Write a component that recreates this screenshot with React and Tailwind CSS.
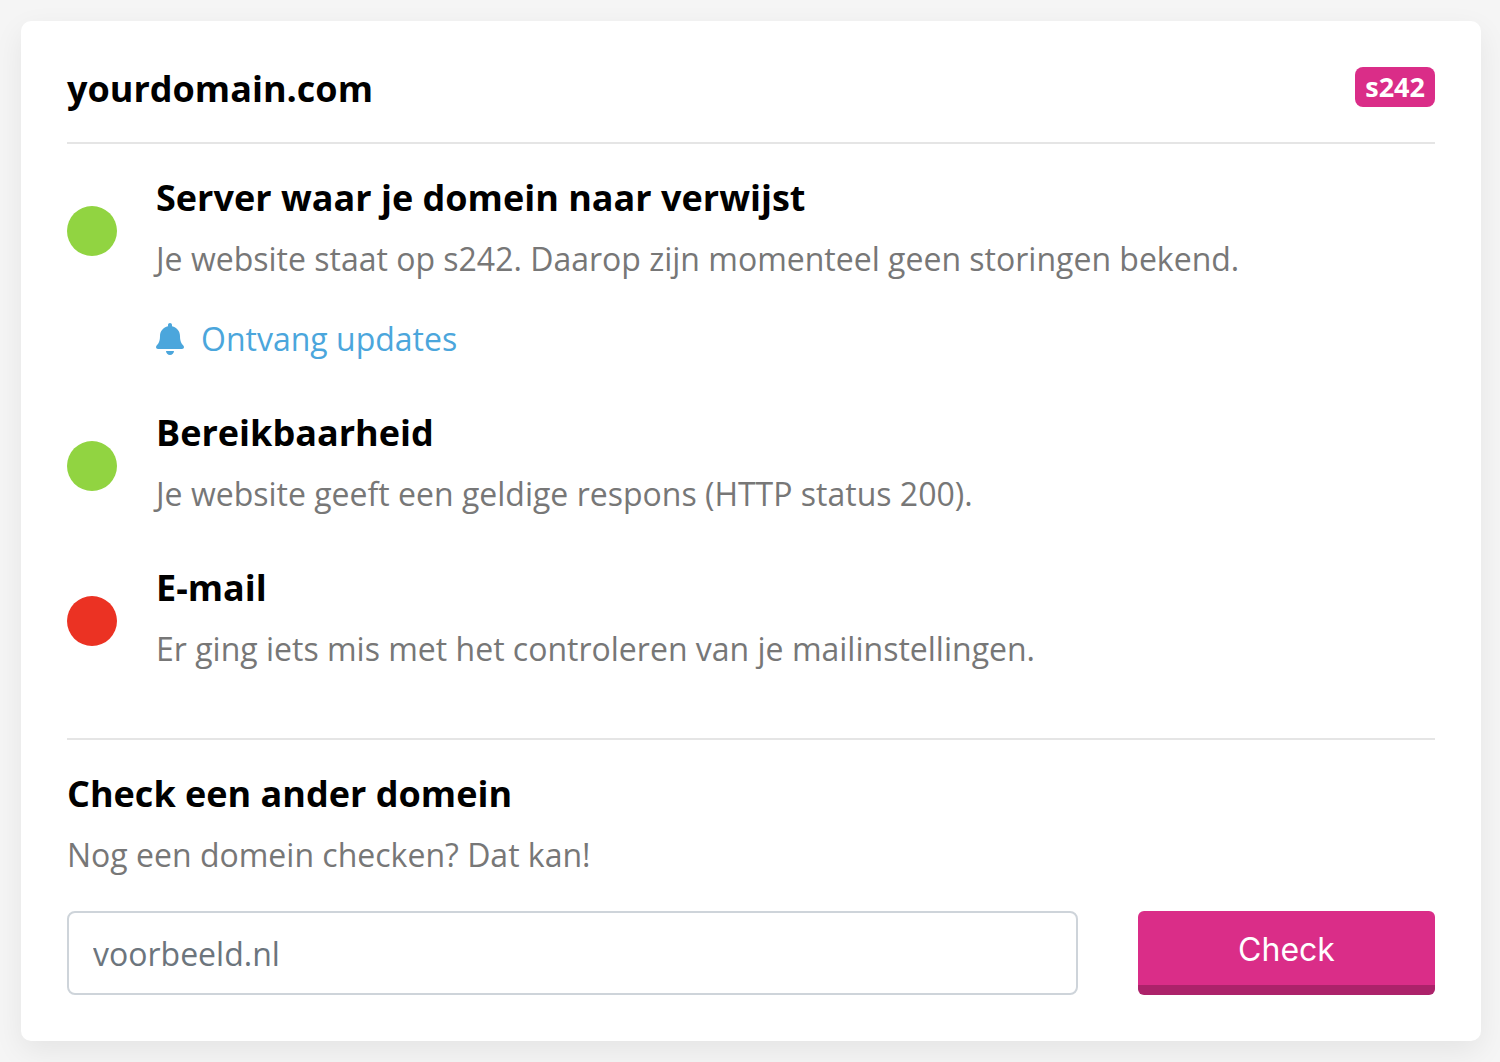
import { useState } from 'react'

const checks = [
  {
    titel: 'Server waar je domein naar verwijst',
    tekst: 'Je website staat op s242. Daarop zijn momenteel geen storingen bekend.',
    ok: true,
    updates: true,
  },
  {
    titel: 'Bereikbaarheid',
    tekst: 'Je website geeft een geldige respons (HTTP status 200).',
    ok: true,
  },
  {
    titel: 'E-mail',
    tekst: 'Er ging iets mis met het controleren van je mailinstellingen.',
    ok: false,
  },
]

function Bell() {
  return (
    <svg className="w-7 h-8" viewBox="0 0 448 512" fill="currentColor" aria-hidden="true">
      <path d="M224 512c35.32 0 63.97-28.65 63.97-64H160.03c0 35.35 28.65 64 63.97 64zm215.39-149.71c-19.32-20.76-55.47-51.99-55.47-154.29 0-77.7-54.48-139.9-127.94-155.16V32c0-17.67-14.32-32-31.98-32s-31.98 14.33-31.98 32v20.84C118.56 68.1 64.08 130.3 64.08 208c0 102.3-36.15 133.53-55.47 154.29-6 6.45-8.66 14.16-8.61 21.71.11 16.4 12.98 32 32.1 32h383.8c19.12 0 32-15.6 32.1-32 .05-7.55-2.61-15.27-8.61-21.71z" />
    </svg>
  )
}

function Check({ titel, tekst, ok, updates }) {
  return (
    <li className="flex items-start gap-[39px]">
      <span className={`mt-[30px] size-[50px] shrink-0 rounded-full ${ok ? 'bg-[#91d441]' : 'bg-[#eb3223]'}`} />
      <div>
        <h2 className="text-[36px] leading-[44px] font-bold text-black">{titel}</h2>
        <p className="mt-[15px] text-[32px] leading-[48px]">{tekst}</p>
        {updates && (
          <a href="#updates" className="mt-8 flex items-center gap-[17px] text-[32px] leading-[48px] text-[#4ba6dc]">
            <Bell />
            Ontvang updates
          </a>
        )}
      </div>
    </li>
  )
}

export default function App() {
  const [domein, setDomein] = useState('')

  return (
    <main className="min-h-screen bg-[#f5f5f5] pt-[21px] pr-[19px] pb-[21px] pl-[21px] font-['Open_Sans',sans-serif] text-[#777777]">
      <section className="rounded-[10px] bg-white p-[46px] shadow-[0_10px_30px_rgba(0,0,0,0.07)]">
        <header className="flex items-start justify-between border-b-2 border-[#e5e5e5] pb-[31px]">
          <h1 className="text-[36px] leading-[44px] font-bold text-black">yourdomain.com</h1>
          <span className="rounded-lg bg-[#da2d88] px-[10px] text-[27px] leading-[40px] font-bold text-white">s242</span>
        </header>

        <ul className="flex flex-col gap-12 border-b-2 border-[#e5e5e5] pt-8 pb-[65px]">
          {checks.map(check => <Check key={check.titel} {...check} />)}
        </ul>

        {/* Ander domein */}
        <form className="pt-8" onSubmit={e => e.preventDefault()}>
          <h2 className="text-[36px] leading-[44px] font-bold text-black">Check een ander domein</h2>
          <label htmlFor="domein" className="mt-[15px] block text-[32px] leading-[48px]">Nog een domein checken? Dat kan!</label>
          <div className="mt-8 flex gap-[60px]">
            <input
              id="domein"
              type="text"
              value={domein}
              onChange={e => setDomein(e.target.value)}
              placeholder="voorbeeld.nl"
              className="h-[84px] min-w-0 flex-1 rounded-lg border-2 border-[#ced4da] bg-white px-6 text-[32px] text-[#495057] placeholder:text-[#6c757d]"
            />
            <button
              type="submit"
              className="h-[84px] w-[297px] rounded-md border-b-10 border-[#ac226a] bg-[#da2d88] pt-1 font-['Inter',sans-serif] text-[32px] text-white">
              Check
            </button>
          </div>
        </form>
      </section>
    </main>
  )
}
